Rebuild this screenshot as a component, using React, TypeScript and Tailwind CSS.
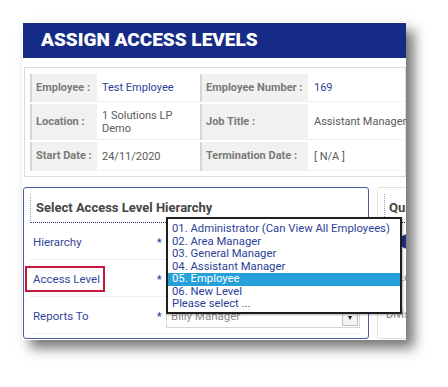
import { FC, ReactNode } from "react";

const font = { fontFamily: "Roboto, 'Liberation Sans', sans-serif" };

const Label: FC<{ children: ReactNode }> = ({ children }) => (
  <div className="flex items-center bg-[#f1f1f1] border-l-2 border-[#d6d6d6] pl-1 text-[11px] font-bold whitespace-nowrap text-[#7a7a7a]">
    {children}
  </div>
);

const Value: FC<{ children: ReactNode; link?: boolean; pad?: string }> = ({ children, link, pad = "pl-[5px]" }) => (
  <div
    className={`flex items-center border-b border-dotted border-[#e2e2e2] ${pad} text-[11px] leading-[13px] whitespace-nowrap ${
      link ? "text-[#2c3f98]" : "text-[#5a5a5a]"
    }`}
  >
    {children}
  </div>
);

const options = [
  "01. Administrator (Can View All Employees)",
  "02. Area Manager",
  "03. General Manager",
  "04. Assistant Manager",
  "05. Employee",
  "06. New Level",
  "Please select ...",
];

const FieldRow: FC<{ label: string; children?: ReactNode }> = ({ label, children }) => (
  <div className="flex h-[37px] items-center border-b border-dotted border-[#dedede] ml-[7px] mr-[8px] pt-[3px]">
    <div className="w-[126px] pl-[2px] text-[11.5px] text-[#34469b]">{label}</div>
    <div className="w-[8px] text-[10px] font-bold text-[#2c3f98]">*</div>
    <div className="flex-1 pl-[1px]">{children}</div>
  </div>
);

export default function App() {
  return (
    <div className="w-[448px] h-[387px] bg-white pt-[22px] pl-[22px]" style={font}>
      <div className="relative w-[384px] h-[318px] overflow-hidden bg-white shadow-[8px_8px_12px_rgba(0,0,0,0.55)]">
        <div className="mt-px ml-px h-[35px] bg-[#152b86] flex items-center pl-[18px]">
          <h1 className="text-[19px] font-black text-white">ASSIGN ACCESS LEVELS</h1>
        </div>

        <div className="mt-[9px] ml-[2px] h-[110px] border border-[#dcdcdc] pt-[6px] pl-[5px]">
          <div className="grid grid-cols-[67px_103px_108px_1fr] grid-rows-[28px_36px_29px] gap-y-[2px]">
            <Label>Employee :</Label>
            <Value link>Test Employee</Value>
            <Label>Employee Number :</Label>
            <Value link pad="pl-[6px]">169</Value>

            <Label>Location :</Label>
            <Value>
              <span className="whitespace-normal">
                1 Solutions LP
                <br />
                Demo
              </span>
            </Value>
            <Label>Job Title :</Label>
            <Value pad="pl-[6px]">Assistant Manager</Value>

            <Label>Start Date :</Label>
            <Value>24/11/2020</Value>
            <Label>Termination Date :</Label>
            <Value pad="pl-[6px]">[ N/A ]</Value>
          </div>
        </div>

        <div className="mt-[10px] ml-px flex gap-[8px]">
          <div className="w-[346px] h-[152px] shrink-0 rounded-[3px] border border-[#4c5ba6] pt-[6px]">
            <div className="ml-[6px] h-[29px] flex items-center border-l border-dotted border-[#8f9fd6] border-b border-b-[#23368c] pl-[5px]">
              <span className="text-[13px] font-bold text-[#454545]">Select Access Level Hierarchy</span>
            </div>
            <FieldRow label="Hierarchy" />
            <FieldRow label="Access Level" />
            <FieldRow label="Reports To">
              <div className="flex h-[22px] items-center justify-between border border-[#d5d5d5] pl-[4px] pr-px">
                <span className="text-[11.5px] text-[#8a8a8a]">Billy Manager</span>
                <div className="flex h-[15px] w-[16px] items-center justify-center self-end mb-px border border-[#bcbcbc] bg-[#f4f4f4] text-[7px] text-[#222]">
                  ▼
                </div>
              </div>
            </FieldRow>
          </div>

          <div className="flex-1 h-[152px] rounded-[3px] border border-[#e0e0e0] pt-[6px]">
            <div className="ml-[6px] h-[29px] flex items-center border-l border-dotted border-[#8f9fd6] border-b border-b-[#23368c] pl-[4px]">
              <span className="text-[13px] font-bold text-[#454545]">Quick</span>
            </div>
            <div className="h-[37px] flex items-center pl-[22px]">
              <div className="h-[15px] w-[15px] rounded-full bg-[#1c2f87]" />
            </div>
            <div className="h-[37px] flex items-center pl-[20px] text-[11px] text-[#888]">Location</div>
            <div className="h-[37px] flex items-center pl-[8px] text-[11px] text-[#888]">Division</div>
          </div>
        </div>

        <div className="absolute left-[3px] top-[244px] w-[80px] h-[26px] border-2 border-[#c8163a]" />

        <div className="absolute left-[144px] top-[195px] w-[236px] h-[97px] border-2 border-[#1e1e1e] bg-white pt-[4px] shadow-[1px_1px_2px_rgba(0,0,0,0.3)]">
          {options.map((o) => (
            <div
              key={o}
              className={`h-[12.5px] pl-[4px] text-[11.3px] leading-[12.5px] whitespace-nowrap ${
                o.startsWith("05") ? "bg-[#26a0da] text-white" : "text-[#2c3f98]"
              }`}
            >
              {o}
            </div>
          ))}
        </div>
      </div>
    </div>
  );
}
